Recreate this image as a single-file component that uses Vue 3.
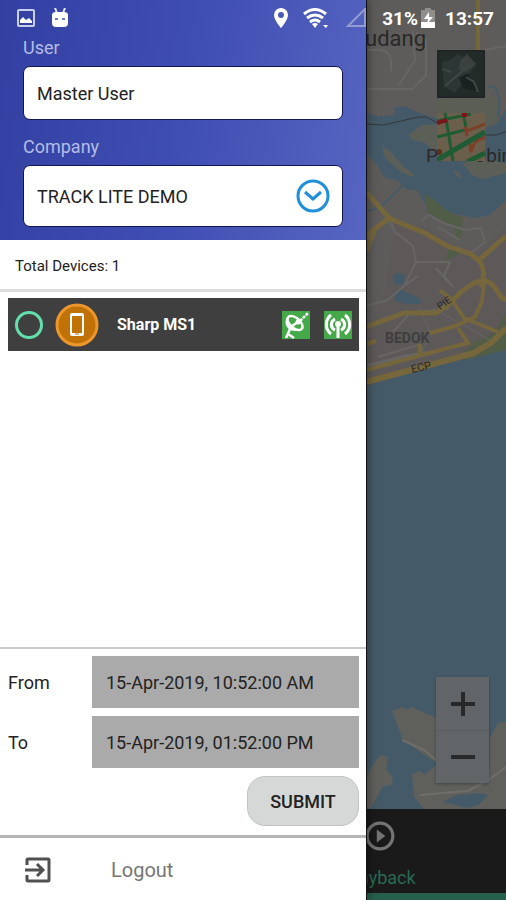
<template>
  <div class="screen">
    <div class="app">
      <main class="map">
        <svg class="map-canvas" viewBox="0 0 506 810" preserveAspectRatio="xMaxYMin slice" aria-hidden="true">
          <rect width="506" height="810" fill="#5e5c5a" />
          <path fill="#5b5e54" d="M436 100l40-6 22 4v25l-12 5-50-10z" />
          <path fill="#5c5859" d="M395 222l30 6 50 28 31-30v100l-66 40-74 20v-40l20-60z" opacity=".7" />
          <!-- straits and sea -->
          <g fill="#455a68">
            <path d="M366 113l12 3 17-1-1-7 11-2 14 7 17 5 24 4 26 6 12-5 8-14v91l-16 15-15 3-25-5-14-1-12-9-6-12-12-2-8-8-14-4-8-14-12-10-8-16-10-4z" />
            <path d="M366 386l60-20 46-10 34-8v462H366z" />
            <ellipse cx="399" cy="279" rx="6" ry="6" />
            <path d="M393 293l8-3 10 4 9 5 1 5h-15l-10-3z" />
          </g>
          <path d="M407 181l-12 12-15 15-14 3M488 86l8 2 4 14-2 12 6 10" fill="none" stroke="#455a68" stroke-width="2" />
          <g fill="#5b5f58">
            <path d="M408 135l14-10 16-1 10 22-11 9-12-12-12-3z" />
            <path d="M382 146l8 5 14 16 10 7-2 3-11-5-16-14z" />
            <path d="M462 163l20-4 24 4v10l-24 6-10-4z" />
            <path d="M453 171l6 1 3 6-4-1z" />
          </g>
          <g fill="#525d48">
            <path d="M424 194l10 6 11 9 10 6 8 2-2 22-4 2-3-13-14-9-12-5z" />
            <path d="M448 250l9-2 4 5-9 5-6 2z" />
            <path d="M464 352l10-9 20-10 12-20v37l-40 10z" />
          </g>
          <!-- minor streets -->
          <g fill="none" stroke="#686664" stroke-width="2">
            <path d="M366 50h15q10 2 10 12v9M366 89h46l14-14V40l-10-8M413 30l2 30-16 25M480 51l26-5" />
            <path d="M389 220l6 12 18 14 3 16-12 24-16 14-22 6M417 262h34M404 286l14-10M421 221l8-6 14 8 22 7 16-2 4 14-14 11M438 227l22 13" />
            <path d="M393 332l18-20 38-3M418 345l-40 12M450 262l-6 14 10 12M436 268l12 14" />
            <path d="M366 366l40-10 24-4" stroke-width="3" />
            <path d="M418 306l14 30M428 340l-8 14M440 312l50 28" stroke-width="1" />
          </g>
          <path d="M366 124l18 1 34-8h8l12 6M484 135h12l10-3" fill="none" stroke="#34383a" stroke-width="1" />
          <g fill="none" stroke="#75663c" stroke-width="5">
            <path d="M366 192l23 26 16 7 20 8 22 13 24 8 10 9 3 10-3 14M366 236l23-18M366 251l8-20M479 260l27-24" />
            <path d="M366 327l38-14h32l12-8 14-14 12-8 10-3 8 4 10 14 4 2" />
            <path d="M366 344l10-3M430 333l25-7 20-9 7-16 2-18M440 290l12 10 12 18 34 14M458 328l10 15-20 5-82 22M420 356v-12" stroke-width="4" />
            <path d="M366 382l60-16 48-13 18-11 14-14" stroke-width="6" />
            <path d="M478 0v60" stroke-width="4" />
          </g>
          <!-- southern islands -->
          <g fill="#5f605b">
            <path d="M392 711l10-4 5 3 4-3 14 6 12 5v45l-14-9-11-8-10-8z" />
            <path d="M412 774l8-3 4 4 12-10h54v-28l8-14 8-2v90h-80l-12-14z" />
            <path d="M374 763l6-8 8 2-2 13 7 7-2 8-8 1-12 22h-5v-30z" />
          </g>
          <path d="M443 802l13-7 24-2 8 2-9 10-12 3z" fill="#455a68" />
          <path d="M402 740l22 10 12 10M420 795l48-4 22-12 16-12" fill="none" stroke="#706e6c" stroke-width="2" />
          <g class="map-text">
            <text x="365" y="46" font-size="22">udang</text>
            <text x="426" y="162" font-size="19">P</text>
            <text x="474" y="162" font-size="19">Ubin</text>
            <text x="385" y="343" font-size="14" font-weight="700" fill="#3f3e3e">BEDOK</text>
            <text x="440" y="310" font-size="10" transform="rotate(-35 440 310)">PIE</text>
            <text x="412" y="373" font-size="11" transform="rotate(-12 412 373)">ECP</text>
          </g>
        </svg>

        <div class="layers">
          <button type="button" class="layer" aria-label="Satellite">
            <svg viewBox="0 0 48 48">
              <rect width="48" height="48" fill="#232b29" />
              <path d="M5 12l8-2 8-6 18 11-9 12-12 16-11-6z" fill="#2d3634" />
              <path d="M24 10l6-6 9 10-10 8-8-3z" fill="#3a413f" />
              <path d="M22 28l9-5 9 18-14-3z" fill="#192120" />
              <path d="M5 19l9 3M8 36l14-12 10-9M29 27l8 5 4 10" stroke="#3d4743" stroke-width="2" fill="none" />
              <rect x="1" y="1" width="46" height="46" fill="none" stroke="#202525" stroke-width="2" />
            </svg>
          </button>
          <button type="button" class="layer" aria-label="Traffic">
            <svg viewBox="0 0 48 48">
              <rect width="48" height="48" fill="#6b5f4c" />
              <g fill="none" stroke-width="3">
                <path d="M0 8l34-7M0 24l28-7M8 0l8 48M26 0l3 14" stroke="#1f5c33" />
                <path d="M30 23l-2-9 2 4 18-7M48 24l-10 5-4 10-1-8" stroke="#7b4128" />
                <path d="M0 10l10-3M25 2h5" stroke="#7c1519" stroke-width="4" />
                <path d="M0 47l48-28M30 49l18-9" stroke="#1f5c33" stroke-width="5" />
              </g>
              <circle cx="2" cy="39" r="3" fill="#57321f" />
            </svg>
          </button>
        </div>

        <div class="zoom">
          <button type="button" aria-label="Zoom in">
            <svg viewBox="0 0 24 24"><path d="M0 12h24M12 0v24" /></svg>
          </button>
          <button type="button" aria-label="Zoom out">
            <svg viewBox="0 0 24 24"><path d="M0 12h24" /></svg>
          </button>
        </div>
      </main>

      <nav class="tabs">
        <button type="button" class="tab">
          <svg viewBox="0 0 28 28">
            <circle cx="14" cy="14" r="12" />
            <path d="M11 8v12l8-6z" />
          </svg>
          <span>Playback</span>
        </button>
      </nav>
    </div>

    <aside class="drawer">
      <header class="account">
        <label for="user">User</label>
        <input id="user" v-model="user" type="text" class="user-box">
        <label for="company">Company</label>
        <div class="company-box">
          <select id="company" v-model="company">
            <option v-for="name in companies" :key="name">{{ name }}</option>
          </select>
          <svg viewBox="0 0 34 34" aria-hidden="true">
            <circle cx="17" cy="17" r="15" />
            <path d="M9 13l8 7 8-7" />
          </svg>
        </div>
      </header>

      <p class="total">Total Devices: {{ devices.length }}</p>

      <ul class="devices">
        <li v-for="device in devices" :key="device.id" class="device">
          <input :id="device.id" v-model="selected" type="radio" name="device" :value="device.id">
          <svg class="avatar" viewBox="0 0 44 44" aria-hidden="true">
            <circle cx="22" cy="22" r="20" fill="#c17206" stroke="#ed962b" stroke-width="3" />
            <path fill="#fff" fill-rule="evenodd" d="M17 10h10a2 2 0 0 1 2 2v19a2 2 0 0 1-2 2H17a2 2 0 0 1-2-2V12a2 2 0 0 1 2-2zm0 3v17h10V13z" />
            <path d="M20 31h4" stroke="#c17206" />
          </svg>
          <label :for="device.id">{{ device.name }}</label>
          <svg class="signal" viewBox="0 0 28 28" role="img" aria-label="GPS">
            <rect width="28" height="28" fill="#45a849" />
            <path d="M5 6C0 15 8 23 20 19z" fill="#fff" />
            <ellipse cx="13" cy="12" rx="5" ry="9" transform="rotate(-48 13 12)" fill="#45a849" stroke="#fff" stroke-width="2.500" />
            <path d="M10 15l6-4M8 18l-4 9M6 23l6 4" fill="none" stroke="#fff" stroke-width="2.500" />
            <circle cx="16" cy="11" r="2.500" fill="#fff" />
            <path d="M18 10l8-8" stroke="#fff" stroke-width="2.500" stroke-dasharray="3 1" />
          </svg>
          <svg class="signal" viewBox="0 0 28 28" role="img" aria-label="Network">
            <rect width="28" height="28" fill="#45a849" />
            <g fill="none" stroke="#fff" stroke-width="3">
              <path d="M7 4a12 12 0 0 0 0 19M21 4a12 12 0 0 1 0 19M11 8a6 6 0 0 0 0 11M17 8a6 6 0 0 1 0 11M14 14v13" />
            </g>
            <circle cx="14" cy="13" r="3" fill="#fff" />
          </svg>
        </li>
      </ul>

      <form class="range" @submit.prevent>
        <div class="field">
          <label for="from">From</label>
          <input id="from" v-model="from" type="text">
        </div>
        <div class="field">
          <label for="to">To</label>
          <input id="to" v-model="to" type="text">
        </div>
        <button type="submit" class="submit">SUBMIT</button>
      </form>

      <button type="button" class="logout">
        <svg viewBox="0 0 26 26" aria-hidden="true">
          <path d="M2 8V3q0-1 1-1h20q1 0 1 1v20q0 1-1 1H3q-1 0-1-1v-5M0 13h17M12 7l6 6-6 6" />
        </svg>
        <span>Logout</span>
      </button>
    </aside>

    <div class="status">
      <svg class="picture" viewBox="0 0 18 18">
        <rect x="1" y="1" width="16" height="16" rx="1" fill="none" stroke="#c9cfec" stroke-width="2" />
        <path d="M3 14v-3l3-3 3 3 3-2 3 3v2z" fill="#fff" />
      </svg>
      <svg class="robot" viewBox="0 0 18 20">
        <path d="M4 0l2 5M14 0l-2 5" stroke="#e4e7f6" stroke-width="2" />
        <path d="M1 7q0-3 4-3h8q4 0 4 3v8q0 4-4 4H5q-4 0-4-4z" fill="#fff" />
        <path d="M4 11h3M11 11h3" stroke="#6f7bc5" stroke-width="2" />
      </svg>
      <svg class="pin" viewBox="0 0 16 20">
        <path fill="#fff" fill-rule="evenodd" d="M8 0a7 7 0 0 1 7 7c0 5-7 13-7 13S1 12 1 7a7 7 0 0 1 7-7zm0 4a3 3 0 1 0 0 6 3 3 0 0 0 0-6z" />
      </svg>
      <svg class="wifi" viewBox="0 0 26 20">
        <g fill="none" stroke="#fff" stroke-width="3">
          <path d="M1 6q11-9 22 0M4 10q8-6 16 0M7 14q5-4 10 0" />
        </g>
        <path d="M9 16q3-2 6 0l-3 4zM20 17h5l-2 3z" fill="#fff" />
      </svg>
      <svg class="cell" viewBox="0 0 20 20">
        <path d="M2 18L19 1v17z" fill="none" stroke="#929bd2" stroke-width="2" />
      </svg>
      <span>31%</span>
      <svg class="battery" viewBox="0 0 14 20">
        <path d="M4 0h6v2h4v18H0V2h4z" fill="#8f8e8c" />
        <path d="M0 14h14v6H0z" fill="#fff" />
        <path d="M8 4l-5 7h4l-1 5 6-7H8z" fill="#fff" />
      </svg>
      <time>13:57</time>
    </div>
  </div>
</template>

<script setup>
import { ref } from 'vue'

const user = ref('Master User')
const companies = ['TRACK LITE DEMO']
const company = ref(companies[0])

const devices = ref([
  { id: 'sharp-ms1', name: 'Sharp MS1' }
])
const selected = ref(null)

const from = ref('15-Apr-2019, 10:52:00 AM')
const to = ref('15-Apr-2019, 01:52:00 PM')
</script>

<style>
body {
  margin: 0;
}
</style>

<style scoped>
* {
  box-sizing: border-box;
}

svg {
  display: block;
}

button,
input,
select {
  font: inherit;
  color: inherit;
  margin: 0;
}

.screen {
  position: relative;
  display: grid;
  min-height: 100vh;
  font-family: Roboto, sans-serif;
  font-size: 18px;
  color: #222;
  overflow: hidden;
}

.app,
.drawer {
  grid-area: 1 / 1;
  display: flex;
  flex-direction: column;
}

.map {
  position: relative;
  flex: 1;
  background: #455a68;
}

.map-canvas {
  position: absolute;
  inset: 0;
  width: 100%;
  height: 100%;
}

.map-text {
  fill: #292827;
}

.layers {
  position: absolute;
  top: 50px;
  right: 21px;
  display: grid;
  gap: 15px;
}

.layer {
  width: 48px;
  height: 48px;
  padding: 0;
  border: 0;
  background: none;
}

.zoom {
  position: absolute;
  right: 17px;
  bottom: 26px;
  width: 53px;
  background: #626567;
  box-shadow: 0 1px 3px rgba(0, 0, 0, 0.3);
}

.zoom button {
  display: grid;
  place-items: center;
  width: 100%;
  height: 53px;
  padding: 0;
  border: 0;
  background: none;
}

.zoom button + button {
  border-top: 1px solid #595c5e;
}

.zoom svg {
  width: 24px;
  fill: none;
  stroke: #292929;
  stroke-width: 4;
}

.tabs {
  display: flex;
  justify-content: flex-end;
  height: 91px;
  background: #1a1a1a;
}

.tab {
  display: flex;
  flex-direction: column;
  align-items: center;
  gap: 16px;
  width: 50%;
  padding: 12px 0 0;
  border: 0;
  border-bottom: 7px solid #265f4b;
  background: none;
  color: #2a6a53;
}

.tab svg {
  width: 30px;
  fill: #747474;
}

.tab circle {
  fill: none;
  stroke: #747474;
  stroke-width: 3;
}

.drawer {
  position: relative;
  width: 367px;
  max-width: 90%;
  background: #fff;
  border-right: 1px solid #111;
  box-shadow: 0 0 10px rgba(0, 0, 0, 0.5);
}

.account {
  display: flex;
  flex-direction: column;
  padding: 36px 23px 13px;
  background: linear-gradient(100deg, #3340a2, #3f4eb2 50%, #5765c1);
}

.account label {
  line-height: 24px;
  margin-bottom: 6px;
  color: #b4bce6;
}

.user-box,
.company-box {
  border: 1px solid #10164f;
  border-radius: 7px;
  background: #fff;
}

.user-box {
  width: 100%;
  height: 54px;
  padding: 0 13px;
  margin-bottom: 15px;
}

.company-box {
  position: relative;
  height: 62px;
}

.company-box select {
  width: 100%;
  height: 100%;
  padding: 0 56px 0 13px;
  border: 0;
  background: none;
  appearance: none;
}

.company-box svg {
  position: absolute;
  top: 13px;
  right: 12px;
  width: 34px;
  fill: none;
  stroke: #1f8fdb;
  stroke-width: 3;
  pointer-events: none;
}

.total {
  margin: 0;
  padding: 15px 15px 12px;
  border-bottom: 3px solid #dcdcdc;
  font-size: 15px;
  line-height: 22px;
}

.devices {
  flex: 1;
  margin: 0;
  padding: 6px 7px 6px 8px;
  list-style: none;
}

.device {
  display: flex;
  align-items: center;
  height: 53px;
  padding: 0 7px;
  background: #3f3f3f;
  color: #fff;
}

.device input {
  appearance: none;
  width: 28px;
  height: 28px;
  border: 3px solid #63dfac;
  border-radius: 50%;
}

.device input:checked {
  background: #63dfac;
}

.avatar {
  width: 44px;
  margin: 0 18px 0 12px;
}

.device label {
  flex: 1;
  font-size: 16px;
  font-weight: 700;
}

.signal {
  width: 28px;
  margin-left: 14px;
}

.range {
  display: flex;
  flex-direction: column;
  gap: 8px;
  padding: 7px 7px 9px 8px;
  border-top: 2px solid #cbcbcb;
}

.field {
  display: flex;
  align-items: center;
}

.field label {
  width: 84px;
}

.field input {
  flex: 1;
  min-width: 0;
  height: 52px;
  padding: 0 14px;
  border: 0;
  background: #aaa;
}

.submit {
  align-self: flex-end;
  width: 112px;
  height: 50px;
  padding: 0;
  border: 1px solid #c2c4c4;
  border-radius: 18px;
  background: #d6d8d8;
  font-weight: 500;
}

.logout {
  display: flex;
  align-items: center;
  gap: 60px;
  height: 65px;
  padding: 2px 25px 0;
  border: 0;
  border-top: 3px solid #b4b4b4;
  background: none;
  color: #757575;
  font-size: 20px;
}

.logout svg {
  width: 26px;
  fill: none;
  stroke: #505050;
  stroke-width: 3;
}

.status {
  position: absolute;
  top: 0;
  left: 0;
  right: 0;
  display: flex;
  align-items: center;
  height: 36px;
  padding: 0 12px 0 17px;
  color: #fff;
  font-size: 19px;
  font-weight: 700;
}

.picture,
.robot {
  width: 18px;
  margin-right: 16px;
}

.pin {
  width: 16px;
  margin: 0 14px 0 auto;
}

.wifi {
  width: 26px;
  margin-right: 17px;
}

.cell {
  width: 20px;
  margin-right: 16px;
}

.battery {
  width: 14px;
  margin: 0 10px 0 3px;
}
</style>
